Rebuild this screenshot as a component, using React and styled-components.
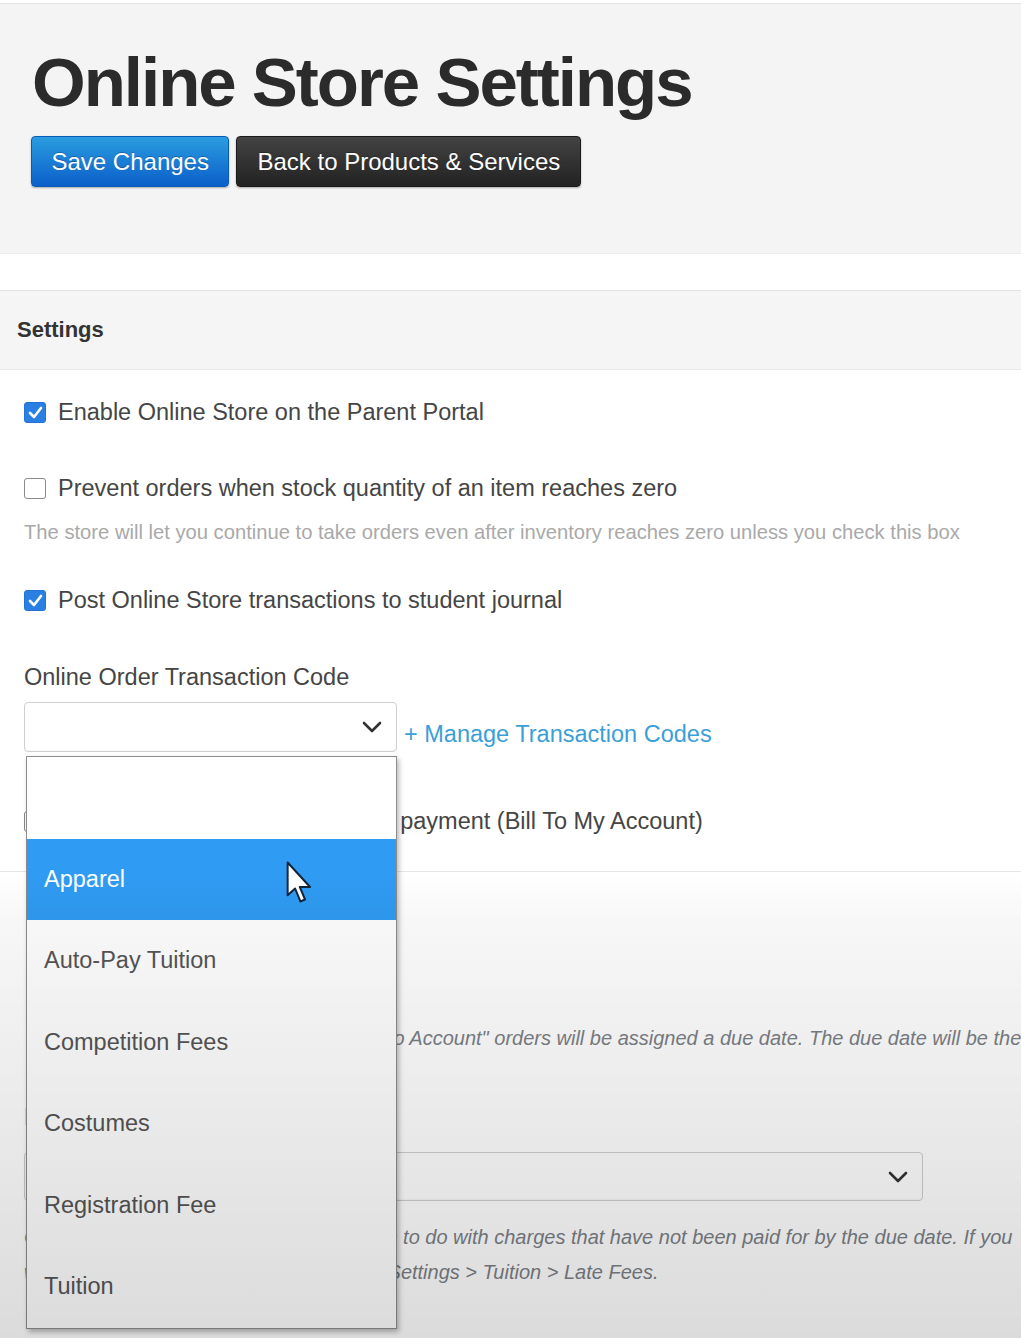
import React from 'react';
import styled, { createGlobalStyle } from 'styled-components';

const Global = createGlobalStyle`
  html, body { margin: 0; padding: 0; background: #fff; overflow: hidden; }
  body { font-family: "Liberation Sans", Arial, sans-serif; color: #444; }
  * { box-sizing: border-box; }
`;

const Page = styled.div`
  position: relative;
  width: 1021px;
  height: 1338px;
  overflow: hidden;
  background: #fff;
`;

const Header = styled.header`
  margin-top: 3px;
  background: #f4f4f4;
  border-top: 1px solid #e6e6e6;
  border-bottom: 1px solid #ebebeb;
  padding: 44px 0 66px 31px;
`;

const Title = styled.h1`
  margin: 0 0 19px 1px;
  font-size: 69px;
  line-height: 69px;
  letter-spacing: -2px;
  font-weight: 700;
  color: #2b2b2b;
`;

const ButtonRow = styled.div`
  display: flex;
  gap: 7px;
`;

const Button = styled.button`
  height: 51px;
  padding: 0 ${p => p.$pad}px;
  border-radius: 4px;
  font-family: inherit;
  font-size: 24px;
  color: #fff;
  text-shadow: 0 -1px 0 rgba(0, 0, 0, 0.25);
  box-shadow: 0 1px 2px rgba(0, 0, 0, 0.3);
  border: 1px solid ${p => (p.$variant === 'primary' ? '#0b5cb8' : '#1a1a1a')};
  background: ${p =>
    p.$variant === 'primary'
      ? 'linear-gradient(to bottom, #2a9ce0, #0b5fca)'
      : 'linear-gradient(to bottom, #434343, #222)'};
`;

const Panel = styled.section`
  margin-top: 36px;
  border-top: 1px solid #e4e4e4;
`;

const PanelHead = styled.div`
  height: 79px;
  background: #f5f5f5;
  border-bottom: 1px solid #e6e6e6;
  padding-left: 17px;
  display: flex;
  align-items: center;
  font-size: 22px;
  font-weight: 700;
  color: #333;
`;

const PanelBody = styled.div`
  padding: 27px 0 35px 24px;
  border-bottom: 1px solid #e6e6e6;
`;

const LowerBody = styled.div`
  padding: 154px 0 0 24px;
`;

const CheckRow = styled.label`
  display: flex;
  align-items: center;
  gap: 12px;
  height: 30px;
  margin-top: ${p => p.$mt || 0}px;
  font-size: 23.5px;
  color: #454545;
  white-space: nowrap;
`;

const Box = styled.span`
  flex: none;
  width: 22px;
  height: 21px;
  border-radius: 3px;
  display: flex;
  align-items: center;
  justify-content: center;
  background: ${p => (p.$checked ? '#2a7fe2' : '#fff')};
  border: ${p => (p.$checked ? '1px solid #2373d6' : '1.5px solid #8a8a8a')};
`;

const Help = styled.p`
  margin: ${p => p.$mt || 0}px 0 0;
  font-size: 20.2px;
  line-height: 24px;
  color: #a9a9a9;
  white-space: nowrap;
`;

const ItalicHelp = styled.p`
  margin: ${p => p.$mt || 0}px 0 0 ${p => p.$ml || 0}px;
  font-size: 20px;
  line-height: ${p => p.$lh || 24}px;
  font-style: italic;
  color: #7b8086;
  white-space: nowrap;
`;

const FieldLabel = styled.div`
  margin-top: ${p => p.$mt || 0}px;
  font-size: 23.5px;
  line-height: 28px;
  color: #454545;
`;

const SelectRow = styled.div`
  display: flex;
  align-items: flex-end;
  margin-top: ${p => p.$mt || 0}px;
`;

const SelectWrap = styled.div`
  position: relative;
`;

const SelectBox = styled.div`
  width: ${p => p.$w}px;
  height: ${p => p.$h}px;
  border: 1px solid #cfcfcf;
  border-radius: 4px;
  background: #fff;
  box-shadow: inset 0 -1px 2px rgba(0, 0, 0, 0.04);
  display: flex;
  align-items: center;
  justify-content: flex-end;
  padding-right: 13px;
`;

const ManageLink = styled.a`
  margin: 0 0 4px 7px;
  font-size: 23.5px;
  line-height: 28px;
  color: #3a9fd8;
  text-decoration: none;
`;

const Dropdown = styled.ul`
  position: absolute;
  z-index: 10;
  top: calc(100% + 4px);
  left: 2px;
  width: 371px;
  margin: 0;
  padding: 0;
  list-style: none;
  background: #fff;
  border: 1px solid #8c8c8c;
  box-shadow: 2px 3px 5px rgba(0, 0, 0, 0.28);
`;

const Option = styled.li`
  position: relative;
  height: 81.5px;
  padding-left: 17px;
  display: flex;
  align-items: center;
  font-size: 23.5px;
  color: ${p => (p.$active ? '#fff' : '#555')};
  background: ${p => (p.$active ? '#2f9bf2' : 'transparent')};
`;

const Cursor = styled.svg`
  position: absolute;
  left: 259px;
  top: 22px;
`;

const Vignette = styled.div`
  position: absolute;
  inset: 0;
  z-index: 20;
  pointer-events: none;
  background: linear-gradient(
    to bottom,
    rgba(0, 0, 0, 0) 0,
    rgba(0, 0, 0, 0) 872px,
    rgba(0, 0, 0, 0.03) 920px,
    rgba(0, 0, 0, 0.14) 1338px
  );
`;

const Check = () => (
  <svg width="15" height="13" viewBox="0 0 15 13">
    <path d="M2 7 L6 11 L13 2" fill="none" stroke="#fff" strokeWidth="2.6" strokeLinecap="round" strokeLinejoin="round" />
  </svg>
);

const Chevron = () => (
  <svg width="22" height="14" viewBox="0 0 22 14">
    <path d="M3 3 L11 11 L19 3" fill="none" stroke="#333" strokeWidth="2.6" strokeLinecap="round" strokeLinejoin="round" />
  </svg>
);

const options = ['', 'Apparel', 'Auto-Pay Tuition', 'Competition Fees', 'Costumes', 'Registration Fee', 'Tuition'];

export default function App() {
  return (
    <Page>
      <Global />
      <Header>
        <Title>Online Store Settings</Title>
        <ButtonRow>
          <Button $variant="primary" $pad={19.5}>Save Changes</Button>
          <Button $pad={20}>Back to Products &amp; Services</Button>
        </ButtonRow>
      </Header>

      <Panel>
        <PanelHead>Settings</PanelHead>
        <PanelBody>
          <CheckRow>
            <Box $checked><Check /></Box>
            Enable Online Store on the Parent Portal
          </CheckRow>
          <CheckRow $mt={46}>
            <Box />
            Prevent orders when stock quantity of an item reaches zero
          </CheckRow>
          <Help $mt={17}>
            The store will let you continue to take orders even after inventory reaches zero unless you check this box
          </Help>
          <CheckRow $mt={41}>
            <Box $checked><Check /></Box>
            Post Online Store transactions to student journal
          </CheckRow>
          <FieldLabel $mt={48}>Online Order Transaction Code</FieldLabel>
          <SelectRow $mt={11}>
            <SelectWrap>
              <SelectBox $w={373} $h={50}>
                <Chevron />
              </SelectBox>
              <Dropdown>
                {options.map((o, i) => (
                  <Option key={i} $active={o === 'Apparel'}>
                    {o}
                    {o === 'Apparel' && (
                      <Cursor width="31" height="44" viewBox="0 0 14 20">
                        <path
                          d="M0.7 0.7 L0.7 15.6 L4.1 12.5 L6.5 18.4 L8.6 17.5 L6.2 11.8 L10.9 11.8 Z"
                          fill="#fff"
                          stroke="#10233a"
                          strokeWidth="0.9"
                          strokeLinejoin="round"
                        />
                      </Cursor>
                    )}
                  </Option>
                ))}
              </Dropdown>
            </SelectWrap>
            <ManageLink href="#">+ Manage Transaction Codes</ManageLink>
          </SelectRow>
          <CheckRow $mt={54}>
            <Box />
            Allow customers to use deferred payment (Bill To My Account)
          </CheckRow>
        </PanelBody>

        <LowerBody>
          <ItalicHelp $ml={34}>
            When this option is checked, all "Bill To Account" orders will be assigned a due date. The due date will be the first day of the following month.
          </ItalicHelp>
          <FieldLabel $mt={53}>Past Due Charges</FieldLabel>
          <SelectRow $mt={21}>
            <SelectBox $w={899} $h={49}>
              <Chevron />
            </SelectBox>
          </SelectRow>
          <ItalicHelp $mt={19} $lh={35}>
            Choose what you would like your software to do with charges that have not been paid for by the due date. If you
            <br />
            would like to charge late fees, go to your Settings &gt; Tuition &gt; Late Fees.
          </ItalicHelp>
        </LowerBody>
      </Panel>
      <Vignette />
    </Page>
  );
}
